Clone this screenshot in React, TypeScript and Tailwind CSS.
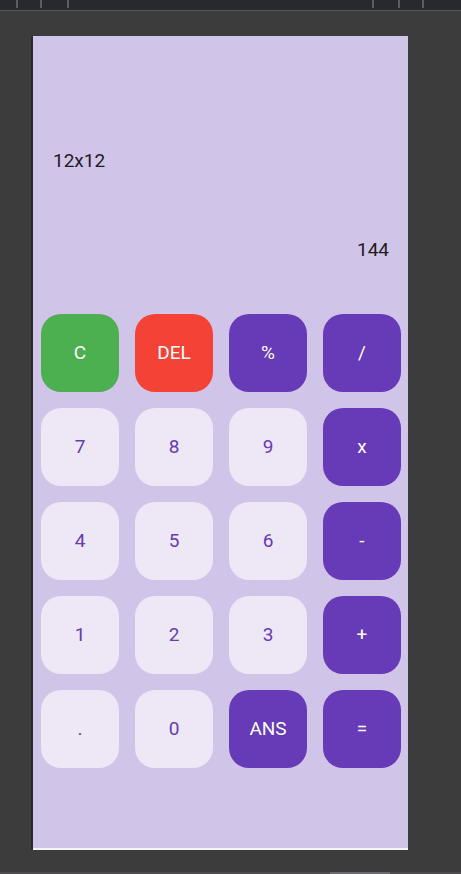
import React from "react";

type Btn = { label: string; kind: "green" | "red" | "purple" | "light" };

const rows: Btn[][] = [
  [
    { label: "C", kind: "green" },
    { label: "DEL", kind: "red" },
    { label: "%", kind: "purple" },
    { label: "/", kind: "purple" },
  ],
  [
    { label: "7", kind: "light" },
    { label: "8", kind: "light" },
    { label: "9", kind: "light" },
    { label: "x", kind: "purple" },
  ],
  [
    { label: "4", kind: "light" },
    { label: "5", kind: "light" },
    { label: "6", kind: "light" },
    { label: "-", kind: "purple" },
  ],
  [
    { label: "1", kind: "light" },
    { label: "2", kind: "light" },
    { label: "3", kind: "light" },
    { label: "+", kind: "purple" },
  ],
  [
    { label: ".", kind: "light" },
    { label: "0", kind: "light" },
    { label: "ANS", kind: "purple" },
    { label: "=", kind: "purple" },
  ],
];

const kindClass: Record<Btn["kind"], string> = {
  green: "bg-[#4caf50] text-white",
  red: "bg-[#f44336] text-white",
  purple: "bg-[#673ab7] text-white",
  light: "bg-[#ede7f6] text-[#673ab7]",
};

export default function App() {
  return (
    <div
      className="w-[461px] h-[874px] bg-[#3c3c3c] flex flex-col overflow-hidden"
      style={{ fontFamily: "Roboto, 'Liberation Sans', sans-serif" }}
    >
      <div className="h-[10px] bg-[#27292c] relative">
        <div className="absolute left-[16px] top-0 w-[2px] h-[8px] bg-[#5a5c60]" />
        <div className="absolute left-[40px] top-0 w-[2px] h-[8px] bg-[#5a5c60]" />
        <div className="absolute left-[67px] top-0 w-[2px] h-[8px] bg-[#5a5c60]" />
        <div className="absolute left-[372px] top-0 w-[2px] h-[8px] bg-[#5a5c60]" />
        <div className="absolute left-[398px] top-0 w-[2px] h-[8px] bg-[#5a5c60]" />
        <div className="absolute left-[422px] top-0 w-[2px] h-[8px] bg-[#5a5c60]" />
      </div>
      <div className="h-[1px] bg-[#58595b]" />
      <div className="flex mt-[25px] ml-[31px]">
        <div className="w-[2px] bg-[#2a2a2a] mt-[1px]" />
        <div className="w-[375px] flex flex-col">
          <div className="h-[812px] bg-[#d1c4e9] flex flex-col">
            <div className="h-[278px] flex flex-col px-[19px] pl-[20px] pt-[113px] text-[19px] text-[#1d1b20]">
              <div className="leading-[24px]">12x12</div>
              <div className="leading-[24px] text-right mt-[65px]">144</div>
            </div>
            <div className="flex flex-col gap-[16px] pl-[8px]">
              {rows.map((row, i) => (
                <div key={i} className="flex gap-[16px]">
                  {row.map((b) => (
                    <div
                      key={b.label}
                      className={`shrink-0 w-[78px] h-[78px] rounded-[20px] flex items-center justify-center text-[19px] ${kindClass[b.kind]}`}
                    >
                      {b.label}
                    </div>
                  ))}
                </div>
              ))}
            </div>
          </div>
          <div className="h-[2px] bg-[#f4f4f4]" />
        </div>
      </div>
      <div className="flex-1" />
      <div className="h-[2px] bg-[#4e4a50] relative">
        <div className="absolute left-[330px] w-[60px] h-[2px] bg-[#6e6870]" />
      </div>
    </div>
  );
}
